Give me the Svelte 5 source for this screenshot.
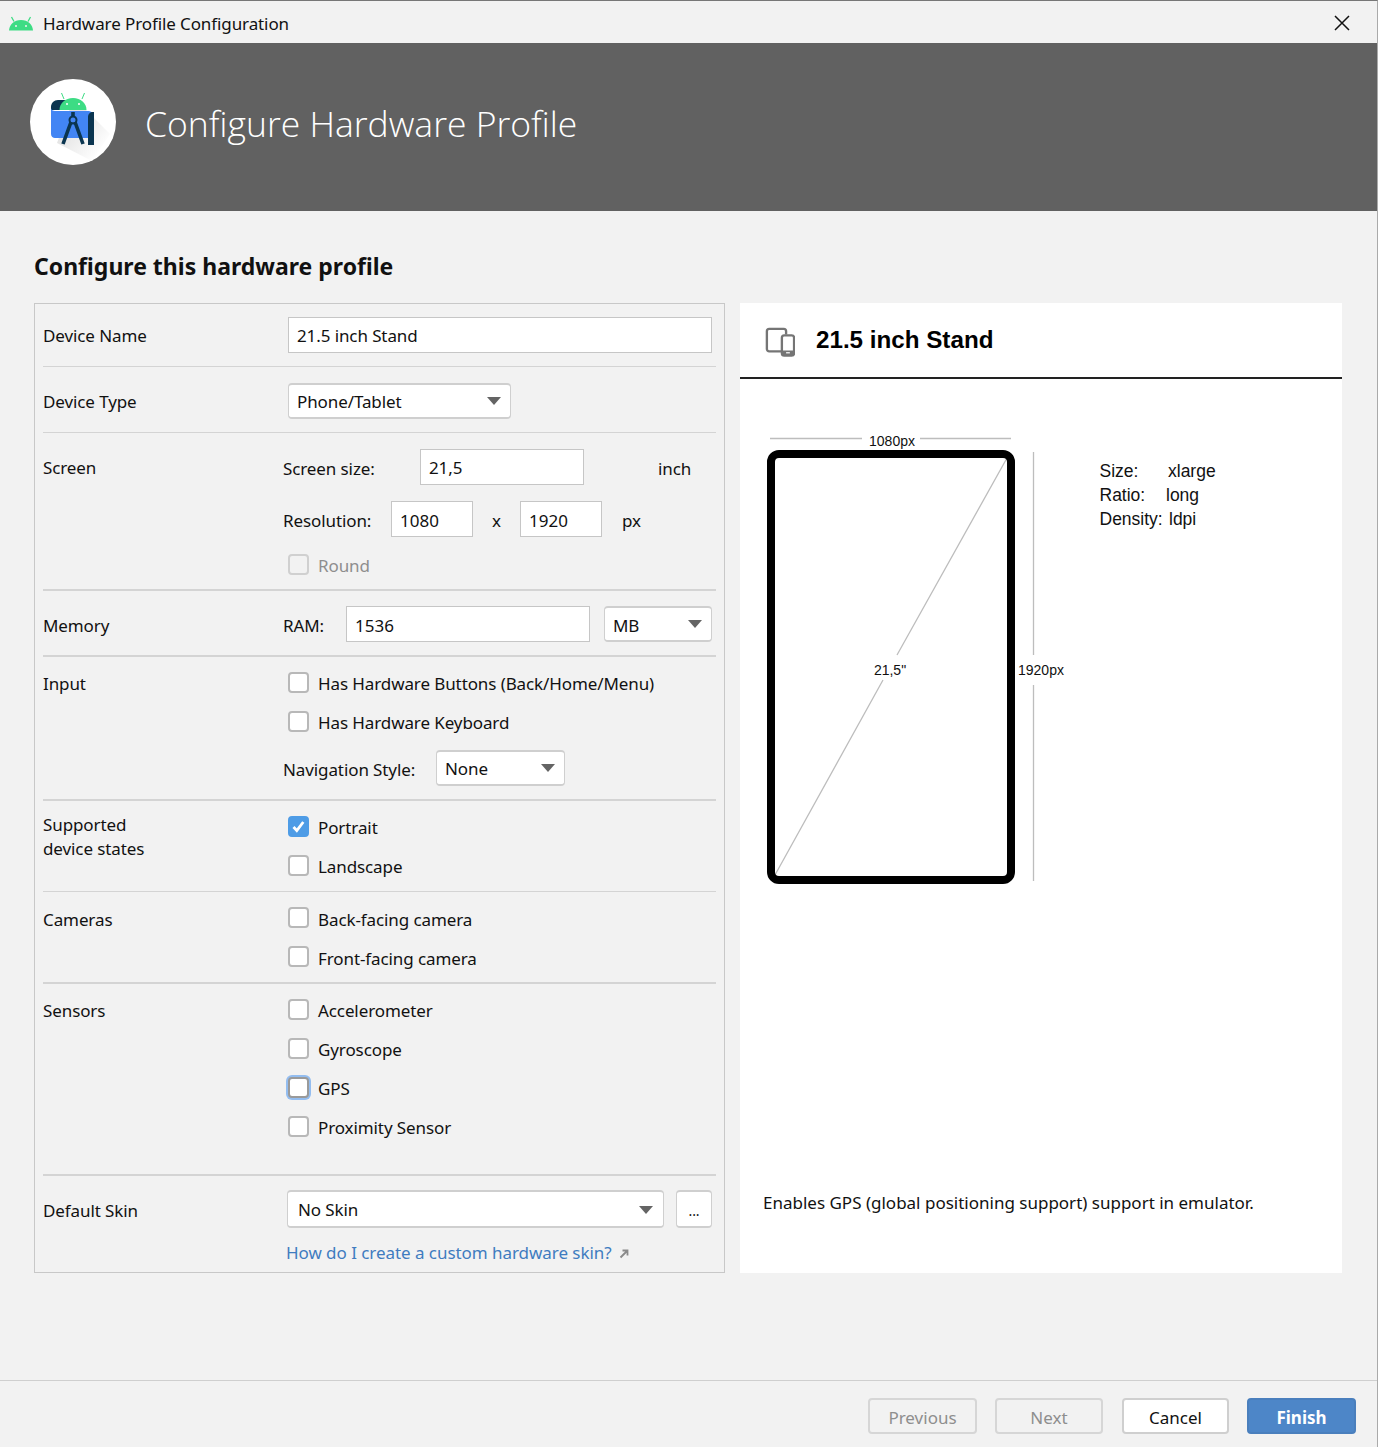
<script>
  const inputFeatures = ['Has Hardware Buttons (Back/Home/Menu)', 'Has Hardware Keyboard'];
  const cameras = ['Back-facing camera', 'Front-facing camera'];
  const sensors = ['Accelerometer', 'Gyroscope', 'GPS', 'Proximity Sensor'];
</script>

{#snippet check(label, cls = '')}
  <label class="check {cls}">
    <span class="box">
      {#if cls === 'on'}
        <svg viewBox="0 0 21 21" width="21" height="21"><path d="M5.500 11l3.300 3.500 6.500-8.500" fill="none" stroke="#fff" stroke-width="2.800" /></svg>
      {/if}
    </span>
    <span>{label}</span>
  </label>
{/snippet}

{#snippet caret()}
  <svg class="caret" viewBox="0 0 14 8" width="14" height="8"><path d="M0 0h14L7 8z" fill="#646464" /></svg>
{/snippet}

<div class="window">
  <header class="titlebar">
    <svg class="droid" viewBox="0 0 26 16" width="26" height="16">
      <path d="M1 15.500C1.500 9.500 6 5 13 5s11.500 4.500 12 10.500z" fill="#3ddc84" />
      <path d="M6 6.500L3.500 2M20 6.500L22.500 2" stroke="#3ddc84" stroke-width="1.300" />
      <circle cx="8" cy="11" r="1" fill="#f2f2f2" /><circle cx="18" cy="11" r="1" fill="#f2f2f2" />
    </svg>
    <span class="wintitle">Hardware Profile Configuration</span>
    <svg class="close" viewBox="0 0 16 16" width="16" height="16"><path d="M1 1l14 14M15 1L1 15" stroke="#111" stroke-width="1.500" /></svg>
  </header>

  <section class="banner">
    <svg class="logo" viewBox="0 0 86 86" width="86" height="86">
      <defs>
        <linearGradient id="logo-shade" x1="0.300" y1="0.300" x2="0.850" y2="0.850">
          <stop offset="0" stop-color="#e2e2e2" />
          <stop offset="1" stop-color="#fff" />
        </linearGradient>
      </defs>
      <circle cx="43" cy="43" r="43" fill="#fff" />
      <path d="M44 19L80 55 62 82 27 64z" fill="url(#logo-shade)" />
      <path d="M21 28c0-4 3-7 7-7h10v10H21z" fill="#0b3550" />
      <path d="M29.500 31c0-7 5.800-12 13.500-12s13.500 5 13.500 12z" fill="#3ddc84" />
      <path d="M34 20l-2.500-6M52 20l2.500-6" stroke="#3ddc84" stroke-width="1" />
      <circle cx="37" cy="25" r="1" fill="#fff" /><circle cx="49" cy="25" r="1" fill="#fff" />
      <path d="M21 29c0 2 2 3 4 3h32c4 0 7 1.500 7 5v22H25c-2 0-4-1.500-4-4z" fill="#4285f4" />
      <path d="M58 66V38c0-3 2-5 5-5h1v33z" fill="#0b3550" />
      <path d="M33 65l8-22M53 65l-8-22M43 33v4" stroke="#0b3550" stroke-width="3.600" fill="none" />
      <circle cx="43" cy="41" r="3.500" fill="none" stroke="#0b3550" stroke-width="2" />
    </svg>
    <h1>Configure Hardware Profile</h1>
  </section>

  <main>
    <h2>Configure this hardware profile</h2>
    <div class="panels">
      <form class="form">
        <div class="row r-name">
          <div class="label">Device Name</div>
          <div class="field inset"><div class="input full">21.5 inch Stand</div></div>
        </div>
        <div class="row r-type">
          <div class="label">Device Type</div>
          <div class="field inset"><div class="select type">Phone/Tablet {@render caret()}</div></div>
        </div>
        <div class="row r-screen">
          <div class="label">Screen</div>
          <div class="field stack">
            <div class="line l-size">
              <span class="cap-size">Screen size:</span>
              <div class="input size">21,5</div>
              <span class="unit-inch">inch</span>
            </div>
            <div class="line l-res">
              <span class="cap-res">Resolution:</span>
              <div class="input res">1080</div>
              <span class="times">x</span>
              <div class="input res">1920</div>
              <span class="unit-px">px</span>
            </div>
            <div class="inset round">{@render check('Round', 'off')}</div>
          </div>
        </div>
        <div class="row thick r-mem">
          <div class="label">Memory</div>
          <div class="field line">
            <span class="cap-ram">RAM:</span>
            <div class="input ram">1536</div>
            <div class="select unit">MB {@render caret()}</div>
          </div>
        </div>
        <div class="row thick r-input">
          <div class="label">Input</div>
          <div class="field stack">
            <div class="inset checks">
              {#each inputFeatures as f}{@render check(f)}{/each}
            </div>
            <div class="line l-nav">
              <span class="cap-nav">Navigation Style:</span>
              <div class="select nav">None {@render caret()}</div>
            </div>
          </div>
        </div>
        <div class="row r-states">
          <div class="label">Supported<br />device states</div>
          <div class="field inset checks">
            {@render check('Portrait', 'on')}
            {@render check('Landscape')}
          </div>
        </div>
        <div class="row thick r-cams">
          <div class="label">Cameras</div>
          <div class="field inset checks">
            {#each cameras as c}{@render check(c)}{/each}
          </div>
        </div>
        <div class="row thick r-sensors">
          <div class="label">Sensors</div>
          <div class="field inset checks">
            {#each sensors as s}{@render check(s, s === 'GPS' ? 'focus' : '')}{/each}
          </div>
        </div>
        <div class="row last">
          <div class="label">Default Skin</div>
          <div class="field skin">
            <div class="line">
              <div class="select skinsel">No Skin {@render caret()}</div>
              <div class="dots">...</div>
            </div>
            <a class="link" href="#skin">How do I create a custom hardware skin?
              <svg viewBox="0 0 10 10" width="10" height="10"><path d="M1.500 8.500L8 2M3.500 1.500H8.500V6.500" fill="none" stroke="#8a8a8a" stroke-width="1.800" /></svg>
            </a>
          </div>
        </div>
      </form>

      <aside class="preview">
        <div class="preview-head">
          <svg viewBox="0 0 32 32" width="30" height="30">
            <path d="M19 26H4.500A2.500 2.500 0 0 1 2 23.500V4.500A2.500 2.500 0 0 1 4.500 2H20a2.500 2.500 0 0 1 2.500 2.500V8" fill="none" stroke="#757575" stroke-width="2.500" />
            <rect x="18" y="9" width="13" height="21.500" rx="2.500" fill="#fff" stroke="#757575" stroke-width="2.500" />
            <path d="M18 25h13v3a2 2 0 0 1-2 2H20a2 2 0 0 1-2-2z" fill="#757575" />
            <path d="M22.500 27.500h4" stroke="#fff" stroke-width="1.300" />
          </svg>
          <span>21.5 inch Stand</span>
        </div>
        <div class="canvas">
          <svg class="diagram" viewBox="0 0 602 510" width="602" height="510">
            <g stroke="#bdbdbd" stroke-width="1.300">
              <path d="M30 59.500H122M180 59.500H271" />
              <path d="M293.500 73V276M293.500 306V502" />
              <path d="M35 496L143 301M157 276L267 79" />
            </g>
            <rect x="31" y="75" width="240" height="426" rx="8" fill="none" stroke="#000" stroke-width="8" />
            <g class="dim">
              <text x="152" y="67" text-anchor="middle">1080px</text>
              <text x="150" y="296" text-anchor="middle">21,5"</text>
              <text x="278" y="296">1920px</text>
            </g>
            <g class="spec">
              <text x="359.500" y="98">Size:</text><text x="428" y="98">xlarge</text>
              <text x="359.500" y="122">Ratio:</text><text x="426" y="122">long</text>
              <text x="359.500" y="146">Density:</text><text x="429" y="146">ldpi</text>
            </g>
          </svg>
          <p class="hint">Enables GPS (global positioning support) support in emulator.</p>
        </div>
      </aside>
    </div>
  </main>

  <footer>
    <button class="ghost prev" disabled>Previous</button>
    <button class="ghost next" disabled>Next</button>
    <button class="cancel">Cancel</button>
    <button class="finish">Finish</button>
  </footer>
</div>

<style>
  :global(body) {
    margin: 0;
  }

  .window {
    box-sizing: border-box;
    height: 1447px;
    display: flex;
    flex-direction: column;
    background: #f2f2f2;
    border-top: 1px solid #777;
    border-right: 1px solid #aaa;
    font-family: "Noto Sans", "Open Sans", sans-serif;
    font-size: 17px;
    letter-spacing: -0.1px;
    color: #111;
  }

  .titlebar {
    box-sizing: border-box;
    height: 42px;
    display: flex;
    align-items: center;
    padding: 2px 27px 0 8px;
    flex: none;
  }

  .droid {
    margin-right: 9px;
  }

  .wintitle {
    flex: 1;
  }

  .banner {
    height: 168px;
    flex: none;
    background: #616161;
    display: flex;
    align-items: center;
    padding-left: 30px;
    padding-bottom: 10px;
    box-sizing: border-box;
  }

  .banner h1 {
    margin: 2px 0 0 29px;
    color: #fff;
    font-size: 35.500px;
    font-weight: 300;
    letter-spacing: 0;
    font-family: "Open Sans", "Noto Sans", sans-serif;
  }

  main {
    flex: 1;
    padding: 0 35px 0 34px;
  }

  h2 {
    margin: 0;
    height: 92px;
    padding-top: 39px;
    box-sizing: border-box;
    font-size: 23px;
    line-height: 32px;
    font-weight: 700;
    letter-spacing: 0;
    color: #111;
  }

  .panels {
    display: flex;
    gap: 15px;
    height: 970px;
  }

  .form {
    box-sizing: border-box;
    width: 691px;
    border: 1px solid #c8c8c8;
    padding: 0 8px;
  }

  .row {
    display: flex;
    box-sizing: border-box;
    padding-top: 16px;
    padding-bottom: 13px;
    border-bottom: 1px solid #d4d4d4;
  }

  .row.r-name {
    padding-top: 13px;
  }

  .r-screen {
    padding-bottom: 14px;
    border-bottom: 2px solid #d4d4d4;
  }

  .row.thick {
    border-bottom: 2px solid #d4d4d4;
  }

  .row.r-mem {
    padding-top: 15px;
  }

  .row.r-states {
    padding-bottom: 15px;
  }

  .row.r-cams {
    padding-top: 17px;
    padding-bottom: 14px;
  }

  .row.r-sensors {
    padding-bottom: 37px;
  }

  .row.last {
    padding-top: 14px;
    padding-bottom: 0;
    border-bottom: 0;
  }

  .label {
    width: 240px;
    flex: none;
    line-height: 24px;
    padding-top: 7px;
  }

  .r-mem .label {
    padding-top: 8px;
  }

  .r-sensors .label,
  .r-cams .label,
  .r-input .label {
    padding-top: 0;
    margin-top: -1px;
  }

  .r-states .label {
    padding-top: 0;
    margin-top: -4px;
  }

  .last .label {
    padding-top: 9px;
  }

  .field {
    flex: 1;
    min-width: 0;
  }

  .inset {
    padding-left: 5px;
  }

  .line {
    display: flex;
    align-items: center;
  }

  .line > span {
    padding-top: 2px;
  }

  .input,
  .select,
  .dots {
    box-sizing: border-box;
    height: 36px;
    line-height: 35px;
    background: #fff;
    border: 1px solid #c6c6c6;
    padding-left: 8px;
    position: relative;
  }

  .select,
  .dots {
    border-radius: 4px;
    border-width: 2px 1px;
    border-color: #cfcfcf;
    line-height: 33px;
  }

  .full {
    width: 424px;
  }

  .type {
    width: 223px;
  }

  .caret {
    position: absolute;
    top: 12px;
    right: 9px;
  }

  .cap-size {
    width: 137px;
  }

  .size {
    width: 164px;
  }

  .unit-inch {
    margin-left: 74px;
  }

  .l-res {
    margin-top: 16px;
  }

  .cap-res {
    width: 108px;
  }

  .res {
    width: 82px;
    line-height: 37px;
    letter-spacing: 0;
  }

  .times {
    width: 47px;
    text-align: center;
  }

  .unit-px {
    margin-left: 20px;
  }

  .round {
    margin-top: 18px;
    height: 20px;
  }

  .cap-ram {
    width: 63px;
  }

  .ram {
    width: 244px;
    line-height: 37px;
    letter-spacing: 0;
  }

  .unit {
    width: 108px;
    margin-left: 14px;
    line-height: 35px;
  }

  .checks {
    display: flex;
    flex-direction: column;
    gap: 19px;
  }

  .check {
    display: flex;
    align-items: center;
    gap: 9px;
    height: 20px;
  }

  .box {
    box-sizing: border-box;
    width: 21px;
    height: 21px;
    margin-top: -2px;
    flex: none;
    background: #fff;
    border: 2px solid #b8b8b8;
    border-radius: 4px;
    position: relative;
  }

  .r-cams .box {
    margin-top: -4px;
  }

  .on .box {
    background: #4e9ce6;
    border-color: #4e9ce6;
  }

  .on svg {
    position: absolute;
    left: -2px;
    top: -2px;
  }

  .focus .box {
    border-color: #9a9a9a;
    box-shadow: 0 0 0 2px #93bdf0;
  }

  .off .box {
    background: transparent;
    border-color: #d0d0d0;
  }

  .off {
    color: #8e8e8e;
  }

  .l-nav {
    margin-top: 18px;
  }

  .cap-nav {
    width: 153px;
  }

  .nav {
    width: 129px;
  }

  .skinsel {
    margin-left: 4px;
    width: 377px;
    height: 38px;
    line-height: 36px;
    padding-left: 10px;
  }

  .skinsel .caret {
    top: 14px;
    right: 10px;
  }

  .dots {
    margin-left: 12px;
    width: 36px;
    height: 38px;
    padding: 0;
    text-align: center;
    line-height: 38px;
    font-size: 14px;
  }

  .link {
    display: block;
    margin: 13px 0 0 3px;
    line-height: 24px;
    letter-spacing: -0.050px;
    color: #3f7cc0;
    text-decoration: none;
  }

  .link svg {
    margin-left: 3px;
  }

  .preview {
    box-sizing: border-box;
    width: 602px;
    background: #fff;
    display: flex;
    flex-direction: column;
    letter-spacing: 0;
  }

  .preview-head {
    height: 76px;
    flex: none;
    box-sizing: border-box;
    border-bottom: 2px solid #222;
    display: flex;
    align-items: center;
    padding-left: 25px;
    gap: 21px;
    font-family: "Liberation Sans", Arial, sans-serif;
    font-size: 24.200px;
    font-weight: 700;
    color: #000;
  }

  .preview-head svg {
    margin-top: 4px;
  }

  .canvas {
    flex: 1;
    display: flex;
    flex-direction: column;
  }

  .diagram {
    flex: none;
  }

  .dim text {
    font-family: "Liberation Sans", Arial, sans-serif;
    font-size: 14px;
    fill: #111;
  }

  .spec text {
    font-family: "Liberation Sans", Arial, sans-serif;
    font-size: 17.500px;
    fill: #111;
  }

  .hint {
    margin: 302px 0 0 23px;
    line-height: 24px;
  }

  footer {
    height: 67px;
    flex: none;
    box-sizing: border-box;
    border-top: 1px solid #cfcfcf;
    display: flex;
    align-items: flex-start;
    padding-top: 17px;
    padding-left: 868px;
  }

  button {
    box-sizing: border-box;
    height: 36px;
    font: inherit;
    border-radius: 4px;
    border: 2px solid #cfcfcf;
    background: #fff;
    color: #111;
    padding: 2px 0 0;
  }

  .ghost {
    background: transparent;
    border-color: #d6d6d6;
    color: #8e8e8e;
  }

  .prev {
    width: 109px;
    margin-right: 18px;
  }

  .next {
    width: 108px;
    margin-right: 19px;
  }

  .cancel {
    width: 107px;
    margin-right: 18px;
  }

  .finish {
    width: 109px;
    background: #4d86c8;
    border-color: #4a7fbd;
    color: #fff;
    font-weight: 700;
  }
</style>
